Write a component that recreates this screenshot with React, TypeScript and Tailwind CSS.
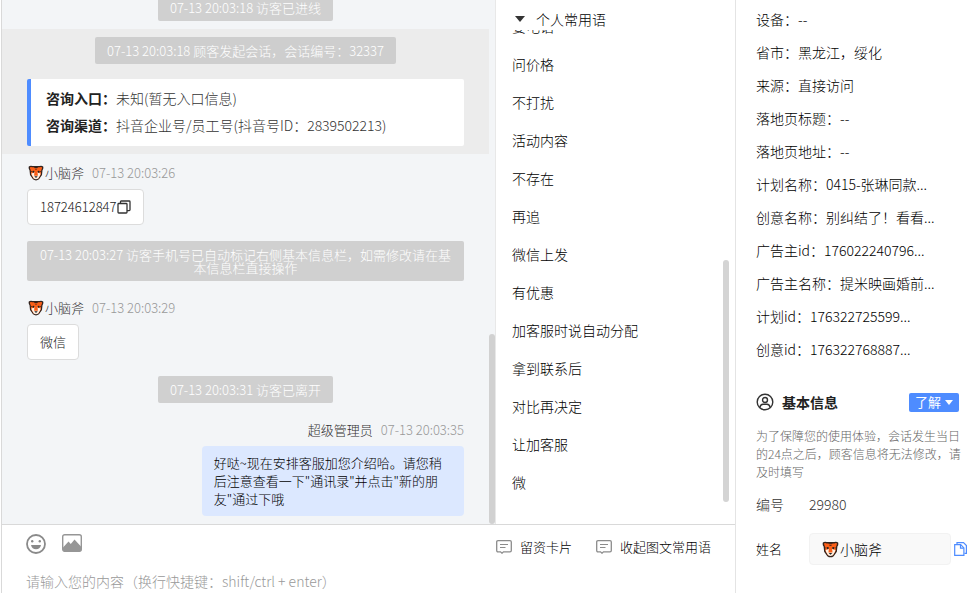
import React, { useState } from 'react';

const visitorInfo = [
  { label: '设备', value: '--' },
  { label: '省市', value: '黑龙江，绥化' },
  { label: '来源', value: '直接访问' },
  { label: '落地页标题', value: '--' },
  { label: '落地页地址', value: '--' },
  { label: '计划名称', value: '0415-张琳同款...' },
  { label: '创意名称', value: '别纠结了！看看...' },
  { label: '广告主id', value: '176022240796...' },
  { label: '广告主名称', value: '提米映画婚前...' },
  { label: '计划id', value: '176322725599...' },
  { label: '创意id', value: '176322768887...' },
];

const phrases = [
  '要电话',
  '问价格',
  '不打扰',
  '活动内容',
  '不存在',
  '再追',
  '微信上发',
  '有优惠',
  '加客服时说自动分配',
  '拿到联系后',
  '对比再决定',
  '让加客服',
  '微',
];

const TigerIcon = ({ className = 'w-4 h-4' }: { className?: string }) => (
  <svg viewBox="0 0 16 16" className={`shrink-0 ${className}`} aria-hidden="true">
    <path d="M.8 1.400Q2.500.2 4.500 1h7Q13.500.2 15.200 1.400q.6 2.300-.7 3.800l-.5 4.800L11 14.300q-3 2.200-6 0L2 10l-.5-4.800Q.2 3.700.8 1.400Z" fill="#33231d" />
    <path d="M2 2.200q1.200-.6 2.200.1h7.600q1-.7 2.200-.1.200 1.500-.7 2.700L12.800 9.500l-2.400 3.900H5.600L3.200 9.500 2.700 4.900Q1.800 3.700 2 2.200Z" fill="#fb5f18" />
    <path d="M3.400 8.500l2.300-.7 1-1h2.600l1 1 2.300.7-.4 1.500-2 3.500q-2.200 1.300-4.400 0L3.800 10Z" fill="#fff3e6" />
    <path d="M6.700 4.500h2.600l.6 6.300H6.100Z" fill="#fb5f18" />
    <path d="M5.800 2h4.400l-1 1.100H6.800ZM6.600 3.700h2.800l-.8.800H7.400ZM2.900 6l1.600.3-1.300.8ZM13.100 6l-1.600.3 1.300.8Z" fill="#33231d" />
    <circle cx="5.400" cy="6.700" r="1" fill="#222" />
    <circle cx="10.600" cy="6.700" r="1" fill="#222" />
    <path d="M6.300 11.200h3.400L8 13Z" fill="#222" />
  </svg>
);

const CardIcon = () => (
  <svg viewBox="0 0 16 14" className="w-4 h-[14px]" fill="none" stroke="#8c8c8c" aria-hidden="true">
    <path d="M2 .7h12q1.300 0 1.300 1.300v8.500q0 1.300-1.300 1.300H7.500L6 13.200l-1.500-1.400H2Q.7 11.800.7 10.500V2Q.7.700 2 .7Z" strokeWidth="1.300" />
    <path d="M4 4.500h8M4 7.500h5.500" strokeWidth="1.100" />
  </svg>
);

const Notice = ({ children }: { children: React.ReactNode }) => (
  <div className="flex justify-center">
    <div className="rounded-xs bg-[#c9c9c9]/85 px-3 py-[7px] text-center text-[13px] leading-[13px] text-white">
      {children}
    </div>
  </div>
);

const VisitorMessage = ({ time, children }: { time: string; children: React.ReactNode }) => (
  <div>
    <div className="flex h-8 items-center pl-px text-[13px] text-[#333]">
      <TigerIcon />
      <span className="ml-px">小脑斧</span>
      <span className="ml-2 text-[#999]">{time}</span>
    </div>
    <div className="inline-flex h-9 items-center rounded-sm border border-[#dcdcdc] bg-white px-3 text-[13px] text-[#222]">
      {children}
    </div>
  </div>
);

const ChatPanel = () => (
  <div className="flex min-w-0 flex-1 border-r border-[#e8e8e8] bg-[#f3f5f7]">
    <div className="flex min-w-0 flex-1 flex-col justify-end overflow-hidden pb-2">
      <Notice>07-13 20:03:18 访客已进线</Notice>

      <section className="mt-2 mb-[3px] bg-[#ececec] px-[25px] py-2">
        <Notice>07-13 20:03:18 顾客发起会话，会话编号：32337</Notice>
        <div className="mt-[15px] rounded-xs border-l-4 border-[#4e8cff] bg-white pt-[6px] pb-[7px] pl-[15px] text-sm leading-[27px] text-[#333]">
          <p><b className="font-bold text-[#222]">咨询入口：</b>未知(暂无入口信息)</p>
          <p><b className="font-bold text-[#222]">咨询渠道：</b>抖音企业号/员工号(抖音号ID：2839502213)</p>
        </div>
      </section>

      <div className="px-[25px]">
        <VisitorMessage time="07-13 20:03:26">
          18724612847
          <button type="button" aria-label="复制">
            <svg viewBox="0 0 14 14" className="w-[14px] h-[14px]" fill="none" stroke="#333" strokeWidth="1.300" aria-hidden="true">
              <rect x="1" y="3.500" width="9" height="9.500" rx=".8" />
              <path d="M3.500 3.500V1.700Q3.500 1 4.200 1h8q.8 0 .8.800v8q0 .8-.8.800H10" />
            </svg>
          </button>
        </VisitorMessage>
        <div className="mt-4 mb-[11px]">
          <Notice>07-13 20:03:27 访客手机号已自动标记右侧基本信息栏，如需修改请在基本信息栏直接操作</Notice>
        </div>
        <VisitorMessage time="07-13 20:03:29">微信</VisitorMessage>
        <div className="mt-4 mb-[11px]">
          <Notice>07-13 20:03:31 访客已离开</Notice>
        </div>
        <div className="flex h-8 items-center justify-end text-[13px] text-[#333]">
          <span>超级管理员</span>
          <span className="ml-2 text-[#999]">07-13 20:03:35</span>
        </div>
        <div className="flex justify-end">
          <p className="max-w-[60%] rounded-sm bg-[#dce8ff] px-3 py-2 text-[13px] leading-[18px] text-black">
            好哒~现在安排客服加您介绍哈。请您稍后注意查看一下"通讯录"并点击"新的朋友"通过下哦
          </p>
        </div>
      </div>
    </div>
    <div className="flex w-1.5 flex-col justify-end">
      <div className="h-[190px] rounded-full bg-[#d1d1d1]" />
    </div>
  </div>
);

const PhrasePanel = () => {
  const [open, setOpen] = useState(true);

  return (
    <aside className="flex w-[239px] shrink-0 flex-col bg-white">
      <button
        type="button"
        onClick={() => setOpen(!open)}
        className="flex h-[30px] shrink-0 items-center gap-[11px] pt-2 pl-[19px] text-left text-sm"
      >
        <svg viewBox="0 0 10 6" className="w-[10px] h-[6px]" fill="#333" aria-hidden="true">
          <path d="M0 0h10L5 6Z" />
        </svg>
        个人常用语
      </button>
      <div className="flex min-h-0 flex-1">
        <ul className="flex min-w-0 flex-1 flex-col justify-end overflow-hidden pb-[23px] pl-4 text-sm">
          {open && phrases.map((phrase) => (
            <li key={phrase} className="h-[38px] shrink-0 leading-[38px]">{phrase}</li>
          ))}
        </ul>
        <div className="mr-1.5 flex w-1.5 flex-col justify-end pb-[22px]">
          <div className="h-[242px] rounded-full bg-[#d4d4d4]" />
        </div>
      </div>
    </aside>
  );
};

const Composer = () => {
  const [text, setText] = useState('');

  return (
    <footer className="flex h-[69px] shrink-0 flex-col justify-between border-t border-[#d9d9d9] bg-white pl-6">
      <div className="flex items-start pt-[9px] pr-6">
        <button type="button" aria-label="表情">
          <svg viewBox="0 0 20 20" className="w-5 h-5" aria-hidden="true">
            <circle cx="10" cy="10" r="9" fill="none" stroke="#8a8a8a" strokeWidth="1.800" />
            <circle cx="6.200" cy="7.300" r="1.200" fill="#8a8a8a" />
            <circle cx="13.800" cy="7.300" r="1.200" fill="#8a8a8a" />
            <path d="M5 11h10q-1 4.300-5 4.300T5 11Z" fill="#8a8a8a" />
          </svg>
        </button>
        <button type="button" aria-label="图片" className="ml-4">
          <svg viewBox="0 0 20 20" className="w-5 h-5" aria-hidden="true">
            <rect x=".7" y=".7" width="18.600" height="16.600" rx="2" fill="none" stroke="#969696" strokeWidth="1.400" />
            <path d="M1 13.500l5.500-6 2.300 2.500L12.500 5.500 19 12.500V16q0 1.400-1.400 1.400H2.400Q1 17.400 1 16Z" fill="#969696" />
          </svg>
        </button>
        <div className="ml-auto flex gap-6 pt-[3px] text-[13px]">
          <button type="button" className="flex items-center gap-2">
            <CardIcon />
            留资卡片
          </button>
          <button type="button" className="flex items-center gap-2">
            <CardIcon />
            收起图文常用语
          </button>
        </div>
      </div>
      <input
        type="text"
        aria-label="消息内容"
        value={text}
        onChange={(e) => setText(e.target.value)}
        placeholder="请输入您的内容（换行快捷键：shift/ctrl + enter）"
        className="h-6 w-full text-sm outline-none placeholder:text-[#999]"
      />
    </footer>
  );
};

const VisitorPanel = () => {
  const [name, setName] = useState('小脑斧');

  return (
    <aside className="w-[235px] shrink-0 overflow-hidden border-l border-[#e4e4e4] bg-white pt-[3px] pl-5 text-sm">
      <ul>
        {visitorInfo.map((item) => (
          <li key={item.label} className="h-[33px] leading-[33px] whitespace-nowrap">
            {item.label}：{item.value}
          </li>
        ))}
      </ul>

      <div className="mt-6 flex h-6 items-center pr-[11px]">
        <svg viewBox="0 0 18 18" className="w-[18px] h-[18px]" fill="none" stroke="#333" strokeWidth="1.400" aria-hidden="true">
          <circle cx="9" cy="9" r="7.800" />
          <circle cx="9" cy="7" r="2.500" />
          <path d="M3.800 14.500q.6-3.300 3.200-3.300h4q2.600 0 3.200 3.300" />
        </svg>
        <h2 className="ml-2 font-bold text-[#222]">基本信息</h2>
        <button type="button" className="ml-auto flex h-[19px] items-center gap-1 rounded-xs bg-[#4e8cff] px-1.5 text-[13px] font-normal text-white">
          了解
          <svg viewBox="0 0 8 5" className="w-2 h-[5px]" fill="#fff" aria-hidden="true">
            <path d="M0 0h8L4 5Z" />
          </svg>
        </button>
      </div>

      <p className="mt-[13px] pr-1 text-xs leading-[18px] text-[#666]">
        为了保障您的使用体验，会话发生当日的24点之后，顾客信息将无法修改，请及时填写
      </p>

      <div className="mt-[11px] flex h-6 items-center text-[#333]">
        <span className="w-[53px]">编号</span>
        <span>29980</span>
      </div>

      <div className="mt-[17px] flex h-8 items-center">
        <label htmlFor="visitor-name" className="w-[53px] shrink-0 text-[13px]">姓名</label>
        <div className="flex h-8 min-w-0 flex-1 items-center rounded-sm border border-[#f2f2f2] bg-[#f9f9f9] pl-3">
          <TigerIcon className="w-[17px] h-[17px]" />
          <input
            id="visitor-name"
            type="text"
            value={name}
            onChange={(e) => setName(e.target.value)}
            className="ml-px w-full min-w-0 bg-transparent outline-none"
          />
        </div>
        <button type="button" aria-label="复制姓名" className="mx-[3px]">
          <svg viewBox="0 0 13 14" className="w-[13px] h-[14px]" fill="none" stroke="#4e8cff" strokeWidth="1.200" aria-hidden="true">
            <path d="M3 2.600V.7h6.500l2.900 2.900v7.700h-2" />
            <path d="M.7 2.700h6l3.200 3.200v7.400H.7Z" />
            <path d="M6.500 2.900v3.300h3.300" />
          </svg>
        </button>
      </div>
    </aside>
  );
};

const App = () => {
  return (
    <div className="flex h-screen min-h-0 overflow-hidden bg-white font-['Noto_Sans_CJK_SC',sans-serif] font-light text-black">
      <main className="ml-px flex min-w-0 flex-1 flex-col border-l border-[#d9d9d9]">
        <div className="flex min-h-0 flex-1">
          <ChatPanel />
          <PhrasePanel />
        </div>
        <Composer />
      </main>
      <VisitorPanel />
    </div>
  );
};

export default App;
